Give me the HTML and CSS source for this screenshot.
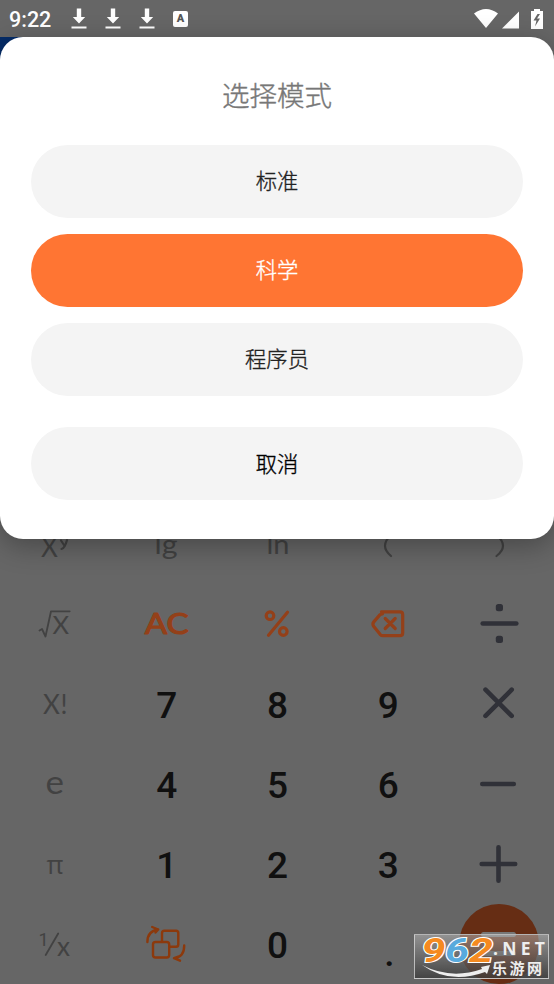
FILE: index.html
```html
<!DOCTYPE html>
<html lang="zh-CN">
<head>
<meta charset="utf-8">
<title>选择模式</title>
<link rel="stylesheet" href="styles.css">
</head>
<body>
<div class="screen">
  <header class="status">
    <span class="clock">9:22</span>
    <svg class="download" viewBox="0 0 16 22"><path d="M5.800 .5h4.400v8.500h4L8 15.500 1.800 9h4zM.5 18.500h15v2H.5z"/></svg>
    <svg class="download" viewBox="0 0 16 22"><path d="M5.800 .5h4.400v8.500h4L8 15.500 1.800 9h4zM.5 18.500h15v2H.5z"/></svg>
    <svg class="download" viewBox="0 0 16 22"><path d="M5.800 .5h4.400v8.500h4L8 15.500 1.800 9h4zM.5 18.500h15v2H.5z"/></svg>
    <span class="lang">A</span>
    <svg class="signals" viewBox="0 0 72 22"><path d="M1 5.500Q13-3.500 25 5.500L13 20zM29 20.500 46 3.500v17zM61 1h6v2h3v18H58V3h3z"/><path class="bolt" d="M64.500 6 60.500 12.500h3L62 18.500l5-8h-3L67 6z"/></svg>
  </header>

  <main class="keypad">
    <div class="key"><svg viewBox="0 0 110 80"><text class="fn" x="41" y="53" font-size="26" textLength="17">X</text><path class="fn-line" d="M61 36.500l3 4.500M67 36q-2 8-5.500 9"/></svg></div>
    <div class="key"><svg viewBox="0 0 110 80"><text class="fn" x="43.500" y="49.500" font-size="27" textLength="23" lengthAdjust="spacingAndGlyphs">lg</text></svg></div>
    <div class="key"><svg viewBox="0 0 110 80"><text class="fn" x="44.500" y="49.500" font-size="27" textLength="23" lengthAdjust="spacingAndGlyphs">ln</text></svg></div>
    <div class="key"><svg viewBox="0 0 110 80"><path class="fn-line" d="M58 31Q46 42 58 52"/></svg></div>
    <div class="key"><svg viewBox="0 0 110 80"><path class="fn-line" d="M52.500 31Q65.500 42 52.500 52"/></svg></div>

    <div class="key"><svg viewBox="0 0 110 80"><path class="fn-line thin" d="M39.500 46.500 42 45l3.500 7.500 5.500-25.200h18.700"/><text class="fn" x="52.500" y="50" font-size="25.500" textLength="16.500">X</text></svg></div>
    <div class="key"><svg viewBox="0 0 110 80"><text class="accent-text" x="33.700" y="50" font-size="29" textLength="44" lengthAdjust="spacingAndGlyphs">AC</text></svg></div>
    <div class="key"><svg class="accent" viewBox="0 0 110 80"><path d="M65.500 28.300 46.500 51.300"/><circle cx="48" cy="31.700" r="3.800"/><circle cx="61.300" cy="47.500" r="3.800"/></svg></div>
    <div class="key"><svg class="accent" viewBox="0 0 110 80"><path d="M48.500 27.800h18.500q2.700 0 2.700 2.700v18.500q0 2.700-2.700 2.700H50q-1.600 0-2.700-1.100l-6.500-8q-1.800-2.600 0-4.700l6-7q1-1.100 2.700-1.100zM52.200 34.500l10 10M62.200 34.500l-10 10"/></svg></div>
    <div class="key"><svg class="operator" viewBox="0 0 110 80"><path d="M38.700 39.500h33.600"/><rect x="51.800" y="20" width="7.200" height="7.200" rx="2.500"/><rect x="51.800" y="51.800" width="7.200" height="7.200" rx="2.500"/></svg></div>

    <div class="key"><svg viewBox="0 0 110 80"><text class="fn" x="43" y="50" font-size="26" textLength="24.500">X!</text></svg></div>
    <div class="key digit">7</div>
    <div class="key digit">8</div>
    <div class="key digit">9</div>
    <div class="key"><svg class="operator" viewBox="0 0 110 80"><path d="m41.500 25.700 26.200 26.200m0-26.200L41.500 51.900"/></svg></div>

    <div class="key"><svg viewBox="0 0 110 80"><text class="fn" x="45.600" y="50" font-size="32" textLength="18.500" lengthAdjust="spacingAndGlyphs">e</text></svg></div>
    <div class="key digit">4</div>
    <div class="key digit">5</div>
    <div class="key digit">6</div>
    <div class="key"><svg class="operator" viewBox="0 0 110 80"><path d="M38.300 40h31.500"/></svg></div>

    <div class="key"><svg viewBox="0 0 110 80"><text class="fn pi" x="46.500" y="49.500" font-size="25" textLength="17" lengthAdjust="spacingAndGlyphs">π</text></svg></div>
    <div class="key digit">1</div>
    <div class="key digit">2</div>
    <div class="key digit">3</div>
    <div class="key"><svg class="operator" viewBox="0 0 110 80"><path d="M37.700 40h33.500M54.500 23.200v33.600"/></svg></div>

    <div class="key"><svg viewBox="0 0 110 80"><text class="fn one" x="38.500" y="41.700" font-size="18">1</text><path class="fn-line thin" d="m58.200 29.500-12.500 21.500"/><text class="fn" x="57" y="51.500" font-size="26" textLength="13" lengthAdjust="spacingAndGlyphs">x</text></svg></div>
    <div class="key"><svg class="accent swap" viewBox="0 0 110 80"><rect x="42" y="38" width="16.200" height="15.500" rx="2.500"/><path d="M51 37.500V29q0-2.300 2.300-2.300h11.700q2.300 0 2.300 2.300v11.500q0 2.300-2.300 2.300h-6M36.400 38q0-11 10.800-12.500l-6-2.500m6 2.500-2.700 3M73.200 41.500q.2 11.500-10.200 12.700l4.200-1.500M63 54.200l6 2.500"/></svg></div>
    <div class="key digit">0</div>
    <div class="key digit point">.</div>
    <div class="key"><div class="equals"><i></i><i></i></div></div>
  </main>

  <div class="sheet">
    <section class="dialog">
      <h1>选择模式</h1>
      <button class="choice">标准</button>
      <button class="choice selected">科学</button>
      <button class="choice">程序员</button>
      <button class="choice cancel">取消</button>
    </section>
  </div>

  <div class="watermark">
    <svg viewBox="0 0 135 45">
      <g class="brand-number"><text x="7.500" y="27.500" textLength="24" lengthAdjust="spacingAndGlyphs">9</text><text class="blue" x="31" y="27.500" textLength="24" lengthAdjust="spacingAndGlyphs">6</text><text x="55" y="27.500" textLength="24" lengthAdjust="spacingAndGlyphs">2</text></g>
      <path class="smile" d="M8 31Q37 46 68 35l-1-2 9-2-3 9-2-2Q36 51 8 31z"/>
      <text class="net" x="79" y="21" textLength="52">.NET</text>
      <text class="site" x="78" y="40" textLength="50">乐游网</text>
    </svg>
  </div>
</div>
</body>
</html>
```
FILE: styles.css
```css
* { box-sizing: border-box; }
body { margin: 0; background: #666; }
.screen {
  position: relative;
  display: flex;
  flex-direction: column;
  justify-content: space-between;
  width: 554px;
  height: 984px;
  overflow: hidden;
  background: #666;
  font-family: Roboto, "Noto Sans CJK SC", sans-serif;
}
.status {
  display: flex;
  align-items: center;
  height: 37px;
  padding: 0 9px;
  color: #fff;
}
.clock { width: 62px; padding-top: 2px; font-size: 21.5px; font-weight: 500; line-height: 37px; }
.download { width: 16px; height: 22px; margin-right: 18px; fill: #fff; }
.lang {
  width: 15px;
  height: 16px;
  border-radius: 2px;
  background: #fff;
  color: #555;
  font-size: 11px;
  font-weight: 900;
  line-height: 16px;
  text-align: center;
}
.signals { width: 72px; height: 22px; margin-left: auto; fill: #fff; }
.signals .bolt { fill: #666; }
.keypad {
  display: grid;
  grid-template-columns: repeat(5, 1fr);
  grid-auto-rows: 80px;
}
.key { display: flex; align-items: center; justify-content: center; }
.key svg { width: 110px; height: 80px; }
.digit { padding: 2px 0 0 1px; color: #101010; font-size: 37px; font-weight: 500; }
.point { padding: 18px 0 0 3px; }
.fn { fill: #424242; font-family: Lato, sans-serif; font-weight: 400; }
.fn.pi { font-family: "Open Sans", sans-serif; }
.fn.one { font-family: Roboto, sans-serif; }
.fn-line { fill: none; stroke: #424242; stroke-width: 2.2; stroke-linecap: round; stroke-linejoin: round; }
.fn-line.thin { stroke-width: 1.8; }
.accent-text {
  fill: #944019;
  stroke: #944019;
  stroke-width: 1.2;
  stroke-linejoin: round;
  font-family: Lato, sans-serif;
  font-weight: 400;
}
.accent { fill: none; stroke: #944019; stroke-width: 3.2; stroke-linecap: round; stroke-linejoin: round; }
.accent.swap { stroke: #8c390c; stroke-width: 2.4; }
.operator { fill: #303138; stroke: #303138; stroke-width: 4.6; stroke-linecap: round; }
.operator rect { stroke: none; }
.equals {
  display: flex;
  flex-direction: column;
  align-items: center;
  justify-content: center;
  gap: 14px;
  width: 80px;
  height: 80px;
  border-radius: 50%;
  background: #662d14;
}
.equals i { width: 35px; height: 5px; border-radius: 3px; background: #777; }
.sheet {
  position: absolute;
  top: 37px;
  left: 0;
  width: 554px;
  height: 502px;
  background: linear-gradient(#052c68, #052c68) 0 0 / 23px 23px no-repeat;
}
.dialog {
  display: flex;
  flex-direction: column;
  height: 502px;
  padding: 39.500px 31px 0;
  border-radius: 23px;
  background: #fff;
  box-shadow: 0 7px 28px rgba(0, 0, 0, .3);
}
.dialog h1 {
  margin: 0 0 28px;
  color: #777;
  font-size: 27.500px;
  font-weight: 300;
  line-height: 40px;
  text-align: center;
  -webkit-text-stroke: .4px #777;
}
.choice {
  flex: none;
  height: 73px;
  margin: 0 0 16.200px;
  padding: 0 0 3px;
  border: 0;
  border-radius: 37px;
  background: #f4f4f4;
  color: #222;
  font-family: "Noto Sans CJK SC", sans-serif;
  font-size: 21.300px;
  font-weight: 300;
  -webkit-text-stroke: .35px currentColor;
}
.selected { background: #ff7533; color: #fff; }
.cancel { margin-top: 15.400px; color: #000; }
.watermark {
  position: absolute;
  top: 934px;
  left: 414px;
  width: 135px;
  height: 45px;
  border: 1px solid rgba(220, 220, 220, .75);
  background: linear-gradient(rgba(190, 190, 190, .5), rgba(60, 60, 60, .8));
}
.watermark svg { display: block; width: 135px; height: 45px; margin: -1px; overflow: visible; }
.brand-number text {
  fill: #f58a20;
  stroke: #fff;
  stroke-width: 2;
  paint-order: stroke;
  font-family: Roboto, sans-serif;
  font-size: 33px;
  font-style: italic;
  font-weight: 700;
}
.brand-number .blue { fill: #58aadd; }
.smile { fill: #eee; }
.net { fill: #eee; font-family: "Open Sans", sans-serif; font-size: 17.500px; font-weight: 700; }
.site { fill: #eee; font-family: "Noto Sans CJK SC", sans-serif; font-size: 15px; font-weight: 700; }
```
